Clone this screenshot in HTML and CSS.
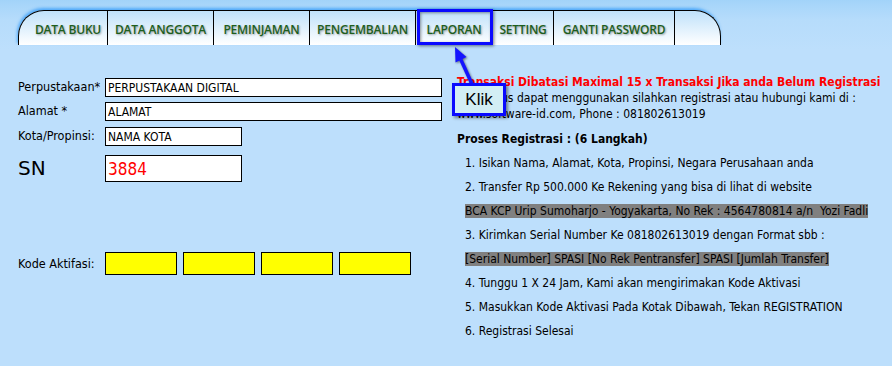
FILE: index.html
```html
<!DOCTYPE html>
<html>
<head>
    <meta charset="UTF-8">
    <title>Registrasi</title>
    <link rel="stylesheet" href="styles.css">
</head>
<body>
    <div class="page">
        <div class="tabs">
            <div class="tab tab-buku">DATA BUKU</div>
            <div class="tab tab-anggota">DATA ANGGOTA</div>
            <div class="tab tab-pinjam">PEMINJAMAN</div>
            <div class="tab tab-kembali">PENGEMBALIAN</div>
            <div class="tab tab-laporan">LAPORAN</div>
            <div class="tab tab-setting">SETTING</div>
            <div class="tab tab-password">GANTI PASSWORD</div>
            <div class="tab tab-end"></div>
        </div>

        <div class="content">
            <!-- Form registrasi -->
            <div class="form">
                <div class="row row-1">
                    <label>Perpustakaan*</label>
                    <div class="field field-long">PERPUSTAKAAN DIGITAL</div>
                </div>
                <div class="row row-2">
                    <label>Alamat *</label>
                    <div class="field field-long">ALAMAT</div>
                </div>
                <div class="row row-3">
                    <label>Kota/Propinsi:</label>
                    <div class="field field-short">NAMA KOTA</div>
                </div>
                <div class="row row-sn">
                    <label class="sn-label">SN</label>
                    <div class="field field-sn">3884</div>
                </div>
                <div class="row row-kode">
                    <label>Kode Aktifasi:</label>
                    <div class="kode-boxes">
                        <div class="kode"></div>
                        <div class="kode"></div>
                        <div class="kode"></div>
                        <div class="kode"></div>
                    </div>
                </div>
            </div>

            <!-- Info registrasi -->
            <div class="info">
                <div class="notice-title">Transaksi Dibatasi Maximal 15 x Transaksi Jika anda Belum Registrasi</div>
                <div class="notice">Agar terus dapat menggunakan silahkan registrasi atau hubungi kami di :<br>www.software-id.com, Phone : 081802613019</div>
                <div class="steps-title">Proses Registrasi : (6 Langkah)</div>
                <ol class="steps">
                    <li>1. Isikan Nama, Alamat, Kota, Propinsi, Negara Perusahaan anda</li>
                    <li>2. Transfer Rp 500.000 Ke Rekening yang bisa di lihat di website</li>
                    <li><span class="mark">BCA KCP Urip Sumoharjo - Yogyakarta, No Rek : 4564780814 a/n&nbsp; Yozi Fadli</span></li>
                    <li>3. Kirimkan Serial Number Ke 081802613019 dengan Format sbb :</li>
                    <li><span class="mark">[Serial Number] SPASI [No Rek Pentransfer] SPASI [Jumlah Transfer]</span></li>
                    <li>4. Tunggu 1 X 24 Jam, Kami akan mengirimakan Kode Aktivasi</li>
                    <li>5. Masukkan Kode Aktivasi Pada Kotak Dibawah, Tekan REGISTRATION</li>
                    <li>6. Registrasi Selesai</li>
                </ol>
            </div>
        </div>

        <!-- Petunjuk klik -->
        <svg class="arrow" width="45" height="50" viewBox="0 0 45 50">
            <line x1="20.8" y1="19.5" x2="32" y2="44" stroke="#1414ff" stroke-width="3.5"/>
            <polygon points="15,7 26.5,17 15.5,22.5" fill="#1414ff"/>
        </svg>
        <div class="klik">Klik</div>
    </div>
</body>
</html>
```

FILE: styles.css
```css
* {
    box-sizing: border-box;
}

body {
    margin: 0;
    width: 892px;
    height: 366px;
    overflow: hidden;
    font-family: "DejaVu Sans Condensed", "DejaVu Sans", sans-serif;
    font-stretch: condensed;
    font-size: 12px;
    color: #000;
    background: linear-gradient(#a2d3f9 0, #a8d6fa 5px, #b6dcfb 20px, #bddffc 50px, #bddffc 100%);
}

.page {
    position: relative;
    height: 366px;
    padding-top: 10px;
}

/* Tab bar */
.tabs {
    display: flex;
    width: 703px;
    height: 35px;
    margin-left: 18px;
    border: 1px solid #000;
    border-bottom: none;
    border-radius: 26px 26px 0 0;
    background: linear-gradient(#bfe1fa, #ffffff);
    box-shadow: -1px -2px 3px rgba(40, 150, 250, 0.7);
}

.tab {
    display: flex;
    align-items: center;
    justify-content: center;
    padding-top: 2px;
    border-right: 1px solid #000;
    font-family: "Open Sans", sans-serif;
    font-stretch: normal;
    font-weight: 600;
    font-size: 12px;
    letter-spacing: -0.2px;
    color: #1d5e1d;
    text-shadow: 1px 1px 2px rgba(0, 0, 0, 0.35);
}

.tab-buku { width: 89px; padding-left: 10px; }
.tab-anggota { width: 106px; }
.tab-pinjam { width: 96px; }
.tab-kembali { width: 106px; }
.tab-laporan { width: 77px; position: relative; }
.tab-setting { width: 61px; }
.tab-password { width: 121px; }
.tab-end { flex: 1; border-right: none; }

.tab-laporan::after {
    content: "";
    position: absolute;
    left: 1px;
    top: -2px;
    right: -1px;
    bottom: 0;
    border: 3px solid #0a0aff;
    box-shadow: 1px 1px 3px rgba(0, 0, 0, 0.5), inset 1px 1px 3px rgba(0, 0, 0, 0.4);
}

/* Content */
.content {
    display: flex;
    padding-left: 18px;
}

.form {
    width: 439px;
    padding-top: 33px;
}

.row {
    display: flex;
    align-items: flex-start;
}

.row label {
    width: 87px;
    line-height: 17px;
    font-size: 12.5px;
}

.row-1 { margin-bottom: 5px; }
.row-2 { margin-bottom: 6px; }
.row-3 { margin-bottom: 9px; }
.row-kode { margin-top: 70px; align-items: center; }

.field {
    height: 19px;
    padding: 2px 0 0 2px;
    background: #fff;
    border: 1px solid #000;
    line-height: 15px;
    font-size: 12px;
}

.field-long { width: 337px; }
.field-short { width: 137px; }

.field-sn {
    width: 137px;
    height: 27px;
    padding-top: 4px;
    line-height: 18px;
    font-size: 17px;
    color: #ff0000;
}

.row-sn label.sn-label {
    line-height: 27px;
    font-size: 20px;
    font-stretch: normal;
    font-family: "DejaVu Sans", sans-serif;
}

.kode-boxes {
    display: flex;
    gap: 6px;
}

.kode {
    width: 72px;
    height: 23px;
    background: #ffff00;
    border: 1px solid #000;
}

/* Info */
.info {
    padding-top: 29px;
}

.notice-title {
    line-height: 16px;
    font-weight: bold;
    color: #ff0000;
}

.notice {
    line-height: 16px;
}

.steps-title {
    margin-top: 5px;
    line-height: 24px;
    font-weight: bold;
}

.steps {
    list-style: none;
    margin: 0;
    padding: 0 0 0 8px;
}

.steps li {
    line-height: 24px;
}

.mark {
    background: #808080;
}

/* Klik callout */
.arrow {
    position: absolute;
    left: 440px;
    top: 40px;
    filter: drop-shadow(1px 1px 1px rgba(0, 0, 0, 0.5));
}

.klik {
    position: absolute;
    left: 452px;
    top: 83px;
    width: 54px;
    height: 33px;
    display: flex;
    align-items: center;
    justify-content: center;
    background: #d2eef4;
    border: 3px solid #0a0aff;
    box-shadow: 2px 2px 3px rgba(0, 0, 0, 0.45);
    font-family: "Liberation Sans", sans-serif;
    font-stretch: normal;
    font-size: 17px;
}
```
